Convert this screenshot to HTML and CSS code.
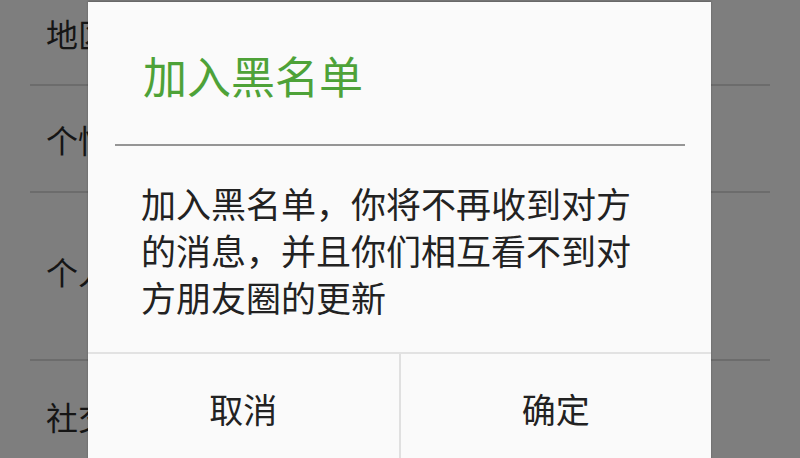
FILE: index.html
```html
<!DOCTYPE html>
<html lang="zh-CN">
<head>
<meta charset="utf-8">
<title>加入黑名单</title>
<link rel="stylesheet" href="styles.css">
</head>
<body>
<div class="screen">
  <ul class="list">
    <li class="row row-1"><span class="label">地区</span></li>
    <li class="row row-2"><span class="label">个性签名</span></li>
    <li class="row row-3"><span class="label">个人相册</span></li>
    <li class="row row-4"><span class="label">社交资料</span></li>
  </ul>
  <div class="dialog">
    <div class="dialog-title">加入黑名单</div>
    <div class="title-rule"></div>
    <div class="dialog-body">加入黑名单，你将不再收到对方的消息，并且你们相互看不到对方朋友圈的更新</div>
    <div class="dialog-actions">
      <div class="action">取消</div>
      <div class="action action-ok">确定</div>
    </div>
  </div>
</div>
</body>
</html>
```

FILE: styles.css
```css
* { box-sizing: border-box; }
html, body {
  margin: 0;
  padding: 0;
  width: 800px;
  height: 458px;
  overflow: hidden;
  background: #7e7e7e;
  font-family: "Noto Sans CJK SC", "Noto Sans", sans-serif;
}
.screen {
  position: relative;
  width: 800px;
  height: 458px;
  overflow: hidden;
  background: #7e7e7e;
}
.list {
  list-style: none;
  margin: -18px 0 0 0;
  padding: 0;
}
.row {
  display: flex;
  align-items: center;
  margin: 0 30px;
  padding-left: 16px;
  border-bottom: 2px solid #6c6c6c;
  color: #151515;
  font-size: 32px;
  line-height: 32px;
}
.row-1 { height: 104px; }
.row-2 { height: 107px; }
.row-3 { height: 168px; padding-bottom: 10px; }
.row-4 { height: 110px; border-bottom: none; }

.dialog {
  position: absolute;
  left: 88px;
  top: 2px;
  width: 623px;
  height: 480px;
  background: #fafafa;
  box-shadow: 0 -1px 2px rgba(0,0,0,0.25);
  display: flex;
  flex-direction: column;
}
.dialog-title {
  padding: 51px 0 0 55px;
  font-size: 44px;
  line-height: 44px;
  color: #4ea238;
  letter-spacing: 0;
}
.title-rule {
  margin: 47px 26px 0 27px;
  height: 2px;
  background: #959595;
}
.dialog-body {
  padding: 33px 52px 32px 53px;
  font-size: 35px;
  line-height: 47px;
  color: #222;
}
.dialog-actions {
  display: flex;
  border-top: 2px solid #e2e2e2;
  height: 112px;
}
.action {
  flex: 1;
  display: flex;
  align-items: center;
  justify-content: center;
  font-size: 34px;
  color: #222;
  padding-bottom: 2px;
}
.action-ok {
  border-left: 2px solid #e0e0e0;
}
```
